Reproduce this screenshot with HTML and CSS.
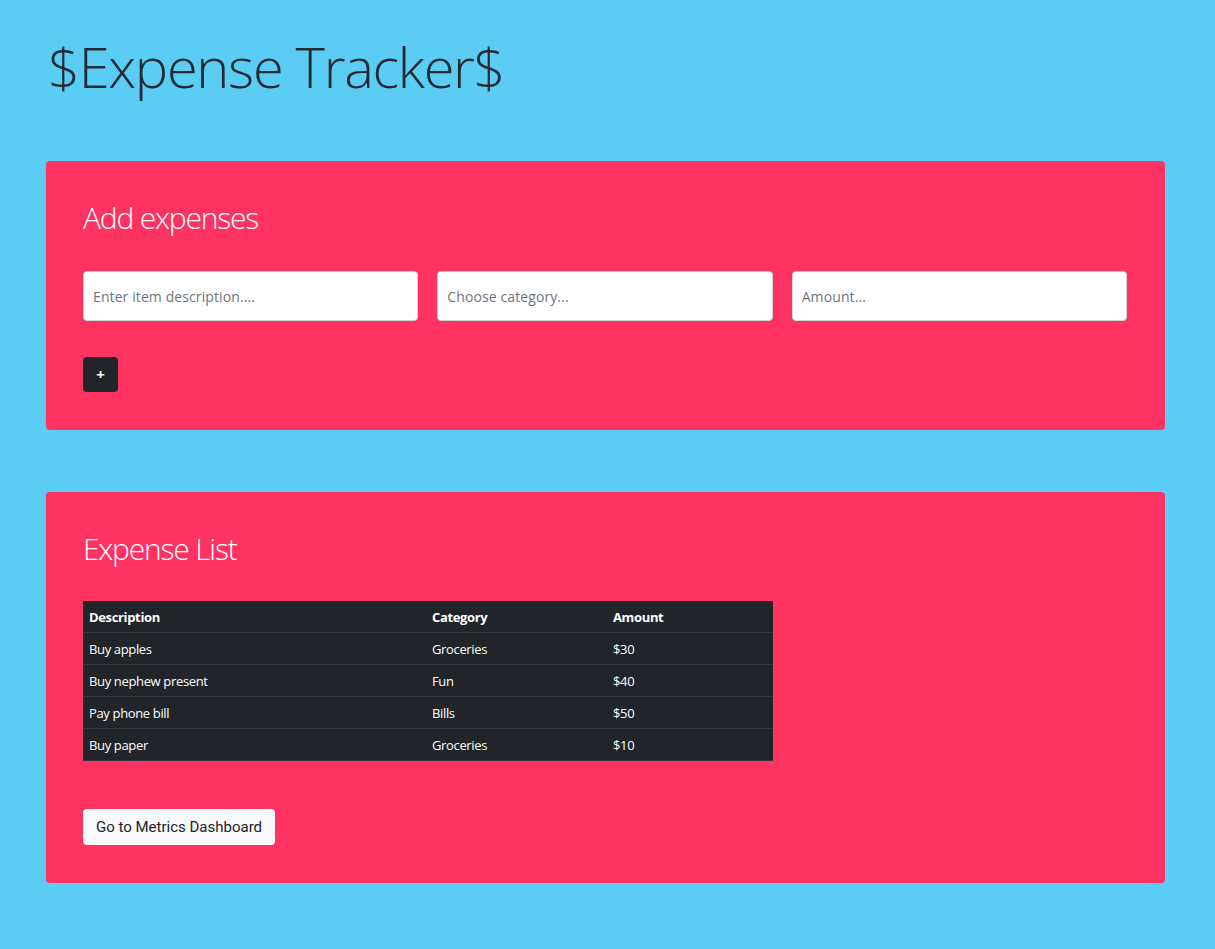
FILE: index.html
```html
<!DOCTYPE html>
<html lang="en">
<head>
<meta charset="utf-8">
<title>Expense Tracker</title>
<link rel="stylesheet" href="styles.css">
</head>
<body>
<div class="page">
  <h1 class="title">$Expense Tracker$</h1>

  <section class="card">
    <h2 class="card-title">Add expenses</h2>
    <form class="form-row">
      <input class="field" type="text" placeholder="Enter item description....">
      <input class="field" type="text" placeholder="Choose category...">
      <input class="field" type="text" placeholder="Amount...">
    </form>
    <button class="btn-add" type="button">+</button>
  </section>

  <section class="card card-list">
    <h2 class="card-title">Expense List</h2>
    <table class="expenses">
      <thead>
        <tr><th class="c-desc">Description</th><th class="c-cat">Category</th><th class="c-amt">Amount</th></tr>
      </thead>
      <tbody>
        <tr><td>Buy apples</td><td>Groceries</td><td>$30</td></tr>
        <tr><td>Buy nephew present</td><td>Fun</td><td>$40</td></tr>
        <tr><td>Pay phone bill</td><td>Bills</td><td>$50</td></tr>
        <tr><td>Buy paper</td><td>Groceries</td><td>$10</td></tr>
      </tbody>
    </table>
    <button class="btn-light" type="button">Go to Metrics Dashboard</button>
  </section>
</div>
</body>
</html>
```

FILE: styles.css
```css
html, body {
  margin: 0;
  padding: 0;
}

body {
  background: #5bcdf4;
  font-family: "Open Sans", "Noto Sans", sans-serif;
  color: #212529;
}

.page {
  padding: 33px 50px 67px 46px;
}

.title {
  margin: 0 0 0 2px;
  font-size: 56px;
  font-weight: 300;
  line-height: 67px;
  letter-spacing: -1.3px;
  color: #222a33;
}

.card {
  margin-top: 61px;
  background: #ff3361;
  border-radius: 4px;
  padding: 38px 38px 38px 37px;
}

.card-list {
  margin-top: 62px;
  padding-bottom: 38px;
}

.card-title {
  margin: 0;
  font-size: 30px;
  font-weight: 300;
  line-height: 38px;
  letter-spacing: -1.2px;
  color: #ffffff;
}

.form-row {
  display: grid;
  grid-template-columns: 1fr 1fr 1fr;
  gap: 19px;
  margin: 34px 0 36px;
}

.field {
  box-sizing: border-box;
  height: 50px;
  width: 100%;
  margin: 0;
  padding: 0 9px;
  border: 1px solid #ced4da;
  border-radius: 4px;
  background: #fff;
  font-family: "Open Sans", "Noto Sans", sans-serif;
  font-size: 14px;
  letter-spacing: 0.1px;
  color: #495057;
}

.field::placeholder {
  color: #6c757d;
  opacity: 1;
}

.btn-add {
  display: block;
  width: 35px;
  height: 35px;
  padding: 0;
  border: 0;
  border-radius: 4px;
  background: #212529;
  color: #fff;
  font-family: "Open Sans", sans-serif;
  font-weight: 700;
  font-size: 15px;
  line-height: 35px;
}

.expenses {
  width: 690px;
  margin-top: 33px;
  border-collapse: collapse;
  background: #212529;
  color: #fff;
  font-size: 13px;
  letter-spacing: -0.35px;
}

.expenses th,
.expenses td {
  text-align: left;
  padding: 7px 6px 5px;
  line-height: 19px;
  border-bottom: 1px solid #32383e;
}

.expenses th {
  font-weight: 700;
}

.c-desc { width: 331px; }
.c-cat { width: 169px; }

.btn-light {
  display: block;
  margin-top: 48px;
  height: 36px;
  padding: 0 13px;
  border: 0;
  border-radius: 4px;
  background: #f8f9fa;
  color: #212529;
  font-family: Roboto, "Liberation Sans", sans-serif;
  font-size: 15px;
}
```
